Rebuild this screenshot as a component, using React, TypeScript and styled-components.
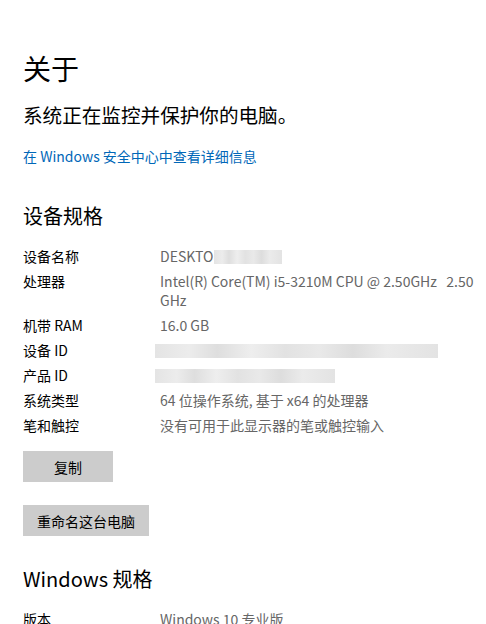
import React from "react";
import styled, { createGlobalStyle, css } from "styled-components";

const GlobalStyle = createGlobalStyle`
  html, body {
    margin: 0;
    padding: 0;
    background: #ffffff;
  }
  body {
    font-family: "Noto Sans CJK SC", "Noto Sans", sans-serif;
    color: #000000;
  }
`;

const specs: { label: string; value?: string; mask?: number; maskOffset?: number }[] = [
  { label: "设备名称", value: "DESKTOP", mask: 68, maskOffset: -8 },
  { label: "处理器", value: "Intel(R) Core(TM) i5-3210M CPU @ 2.50GHz\u00a0\u00a0 2.50 GHz" },
  { label: "机带 RAM", value: "16.0 GB" },
  { label: "设备 ID", mask: 283, maskOffset: -5 },
  { label: "产品 ID", mask: 180, maskOffset: -5 },
  { label: "系统类型", value: "64 位操作系统, 基于 x64 的处理器" },
  { label: "笔和触控", value: "没有可用于此显示器的笔或触控输入" },
];

function App() {
  return (
    <>
      <GlobalStyle />
      <Page>
        <Title>关于</Title>
        <Subtitle>系统正在监控并保护你的电脑。</Subtitle>
        <Link href="#">在 Windows 安全中心中查看详细信息</Link>

        <Heading gap={35}>设备规格</Heading>
        <SpecGrid>
          {specs.map((s) => (
            <React.Fragment key={s.label}>
              <Label>{s.label}</Label>
              <Value>
                {s.value}
                {s.mask ? <Mask width={s.mask} offset={s.maskOffset ?? 0} /> : null}
              </Value>
            </React.Fragment>
          ))}
        </SpecGrid>

        <Buttons>
          <Button width={90}>复制</Button>
          <Button width={126}>重命名这台电脑</Button>
        </Buttons>

        <Heading gap={28}>Windows 规格</Heading>
        <SpecGrid>
          <Label>版本</Label>
          <Value>Windows 10 专业版</Value>
        </SpecGrid>
      </Page>
    </>
  );
}

export default App;

const Page = styled.div`
  padding: 46px 23px 0;
  display: flex;
  flex-direction: column;
  align-items: flex-start;
  height: 624px;
  box-sizing: border-box;
  overflow: hidden;
`;

const Title = styled.h1`
  margin: 0;
  font-size: 28px;
  font-weight: 400;
  line-height: 44px;
`;

const Subtitle = styled.p`
  margin: 11px 0 0;
  font-size: 19.6px;
  line-height: 28px;
`;

const Link = styled.a`
  margin-top: 17px;
  font-size: 14px;
  line-height: 20px;
  color: #0067b8;
  text-decoration: none;
`;

const Heading = styled.h2(
  ({ gap }: { gap: number }) => css`
    margin: ${gap}px 0 0;
    font-size: 20px;
    font-weight: 400;
    line-height: 30px;
  `
);

const SpecGrid = styled.div`
  margin-top: 16px;
  display: grid;
  grid-template-columns: 137px 316px;
  row-gap: 6px;
  font-size: 14px;
  line-height: 19px;
`;

const Label = styled.div`
  color: #000000;
`;

const Value = styled.div`
  color: #666666;
  display: flex;
  flex-wrap: wrap;
  align-items: center;
`;

const Mask = styled.span(
  ({ width, offset }: { width: number; offset: number }) => css`
    display: inline-block;
    width: ${width}px;
    height: 14px;
    margin-left: ${offset}px;
    background: linear-gradient(
      90deg,
      #e4e4e4 0%,
      #ececec 12%,
      #dedede 22%,
      #eeeeee 34%,
      #e2e2e2 46%,
      #e9e9e9 58%,
      #dddddd 70%,
      #ebebeb 82%,
      #e3e3e3 100%
    );
  `
);

const Buttons = styled.div`
  margin-top: 16px;
  display: flex;
  flex-direction: column;
  align-items: flex-start;
  gap: 23px;
`;

const Button = styled.button(
  ({ width }: { width: number }) => css`
    width: ${width}px;
    height: 31px;
    border: none;
    background: #cccccc;
    font-family: "Noto Sans CJK SC", "Noto Sans", sans-serif;
    font-size: 14px;
    color: #000000;
    padding: 0;
  `
);
